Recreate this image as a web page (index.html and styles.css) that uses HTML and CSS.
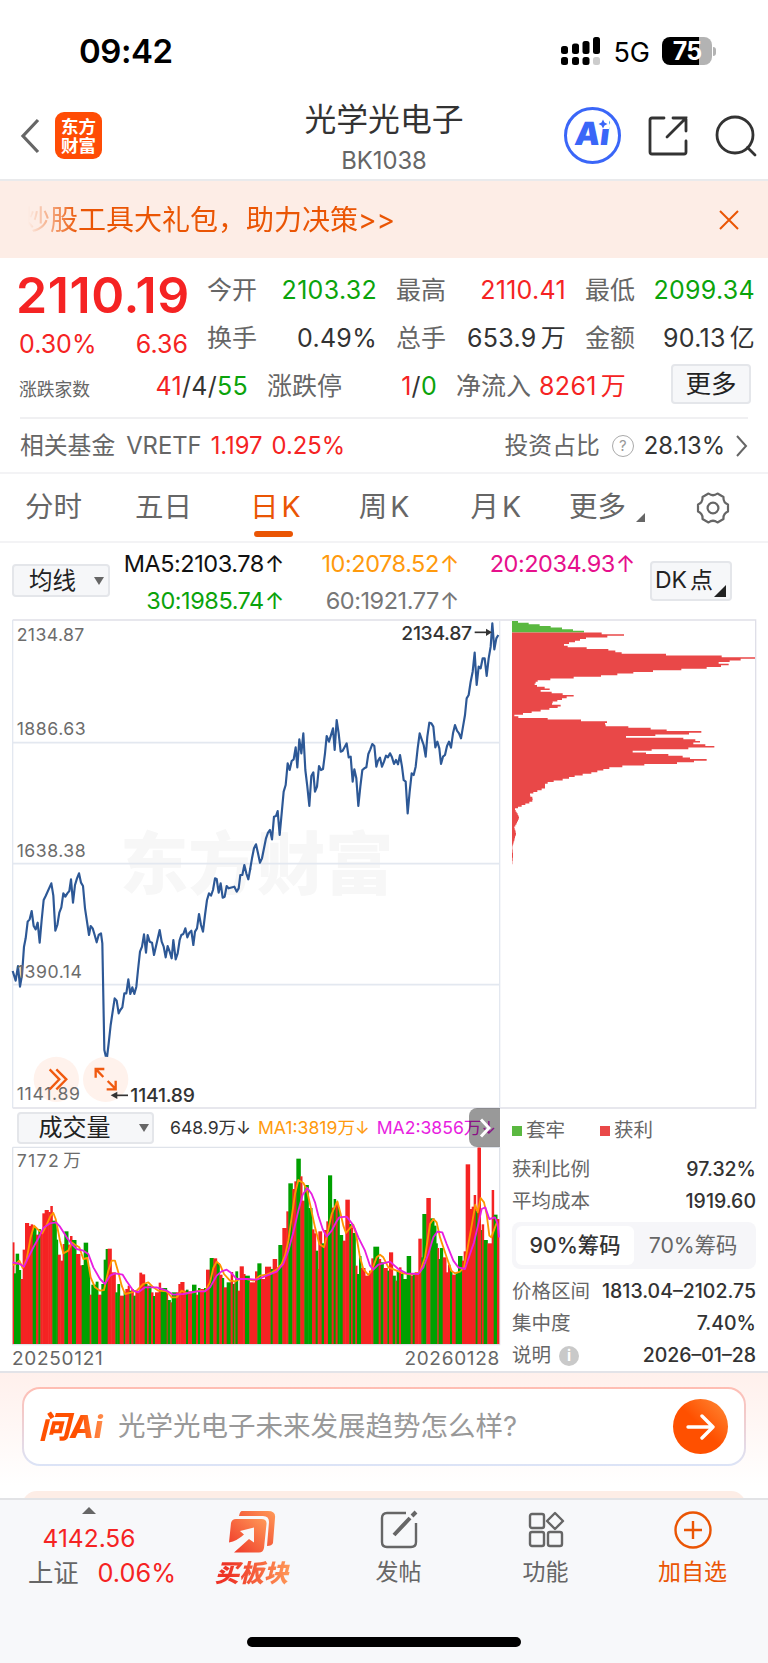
FILE: index.html
```html
<!DOCTYPE html>
<html lang="zh-CN">

<head>
  <meta charset="UTF-8">
  <meta name="viewport" content="width=device-width, initial-scale=1.0">
  <title>光学光电子 BK1038</title>
  <link rel="stylesheet" href="styles.css">
</head>

<body>
  <!-- status bar -->
  <div class="status">
    <span class="clock">09:42</span>
    <div class="status-right">
      <svg class="signal" width="40" height="28" viewBox="0 0 40 28">
        <g fill="#000">
          <rect x="0" y="9" width="7" height="8" rx="2.5" />
          <rect x="11" y="6.500" width="7" height="10.500" rx="2.500" />
          <rect x="21.500" y="4" width="7" height="13" rx="2.500" />
          <rect x="32" y="0" width="7" height="17" rx="2.500" />
          <rect x="0" y="20" width="7" height="8" rx="2.500" />
          <rect x="11" y="20" width="7" height="8" rx="2.500" />
          <rect x="21.500" y="20" width="7" height="8" rx="2.500" />
        </g>
        <rect x="32" y="20" width="7" height="8" rx="2.500" fill="#ccc" />
      </svg>
      <span class="net">5G</span>
      <div class="battery">75</div>
      <i class="battery-tip"></i>
    </div>
  </div>

  <!-- nav -->
  <div class="nav">
    <div class="nav-left">
      <svg width="20" height="36" viewBox="0 0 20 36"><path d="M18 2L3 18L18 34" fill="none" stroke="#666" stroke-width="3.200" /></svg>
      <div class="logo">东方<br>财富</div>
    </div>
    <div class="nav-title">
      <div class="name">光学光电子</div>
      <div class="code">BK1038</div>
    </div>
    <div class="nav-right">
      <div class="ai-badge"><span>Ai</span>
        <svg width="12" height="10" viewBox="0 0 12 10"><path d="M6 0.500L7.500 3.500L10.500 5L7.500 6.500L6 9.500L4.500 6.500L1.500 5L4.500 3.500Z" fill="#3a66f8" /></svg>
      </div>
      <svg width="42" height="42" viewBox="0 0 42 42" fill="none" stroke="#333" stroke-width="2.800" stroke-linecap="round">
        <path d="M17 3H5Q3 3 3 5V37Q3 39 5 39H37Q39 39 39 37V26" />
        <path d="M26 3H39V16M39 3L20 22" />
      </svg>
      <svg class="search" width="42" height="42" viewBox="0 0 42 42" fill="none" stroke="#333" stroke-width="2.800" stroke-linecap="round">
        <circle cx="20" cy="20" r="18" />
        <path d="M32.500 32.500L40 40" />
      </svg>
    </div>
  </div>

  <!-- banner -->
  <div class="banner">
    <div class="banner-text">炒股工具大礼包，助力决策&gt;&gt;</div>
    <svg width="20" height="20" viewBox="0 0 20 20"><path d="M1 1L19 19M19 1L1 19" stroke="#ea5504" stroke-width="2" /></svg>
  </div>

  <!-- quote -->
  <div class="quote">
    <div class="quote-grid">
      <div class="price">
        <div class="now red">2110.19</div>
        <div class="change red"><span>0.30%</span><span>6.36</span></div>
      </div>
      <div class="cell"><label>今开</label><b class="green">2103.32</b></div>
      <div class="cell"><label>最高</label><b class="red">2110.41</b></div>
      <div class="cell"><label>最低</label><b class="green">2099.34</b></div>
      <div class="cell"><label>换手</label><b>0.49%</b></div>
      <div class="cell"><label>总手</label><b>653.9<i>万</i></b></div>
      <div class="cell"><label>金额</label><b>90.13<i>亿</i></b></div>
    </div>
    <div class="quote-row">
      <div class="cell updown"><label class="small">涨跌家数</label><b><span class="red">41</span>/4/<span class="green">55</span></b></div>
      <div class="cell limit"><label>涨跌停</label><b><span class="red">1</span>/<span class="green">0</span></b></div>
      <div class="cell inflow"><label>净流入</label><b class="red">8261<i>万</i></b></div>
      <button class="btn btn-more">更多</button>
    </div>
    <div class="fund">
      <span class="fund-name">相关基金</span>
      <span class="fund-code">VRETF</span>
      <span class="red fund-price">1.197</span>
      <span class="red">0.25%</span>
      <span class="fund-right">投资占比</span>
      <span class="help">?</span>
      <span class="dark">28.13%</span>
      <svg width="13" height="22" viewBox="0 0 13 22"><path d="M2 1L11 11L2 21" fill="none" stroke="#666" stroke-width="2" /></svg>
    </div>
  </div>

  <!-- tabs -->
  <div class="tabs">
    <span>分时</span>
    <span>五日</span>
    <span class="active">日<em>K</em></span>
    <span>周<em>K</em></span>
    <span>月<em>K</em></span>
    <span class="tab-more">更多<svg width="9" height="9" viewBox="0 0 9 9"><path d="M9 0V9H0Z" fill="#666" /></svg></span>
    <svg class="gear" width="34" height="34" viewBox="-17 -17 34 34" fill="none" stroke="#666" stroke-width="2.200">
      <path d="M-4.500 -14.500Q0 -11 4.500 -14.500L10.500 -11Q10 -5.500 15 -3.500V3.500Q10 5.500 10.500 11L4.500 14.500Q0 11 -4.500 14.500L-10.500 11Q-10 5.500 -15 3.500V-3.500Q-10 -5.500 -10.500 -11Z" stroke-linejoin="round" />
      <circle r="5.400" />
    </svg>
  </div>

  <!-- ma -->
  <div class="ma">
    <button class="btn btn-ma">均线<i></i></button>
    <div class="ma-list">
      <span class="c-black">MA5:2103.78<u>↑</u></span>
      <span class="c-orange">10:2078.52<u>↑</u></span>
      <span class="c-pink">20:2034.93<u>↑</u></span>
      <span class="green">30:1985.74<u>↑</u></span>
      <span class="c-gray">60:1921.77<u>↑</u></span>
    </div>
    <button class="btn btn-dk">DK<span>点</span><svg width="12" height="12" viewBox="0 0 12 12"><path d="M12 0V12H0Z" fill="#222" /></svg></button>
  </div>

  <!-- charts -->
  <div class="charts">
    <div class="chart-left">
      <svg class="kline" width="506" height="492" viewBox="0 24 1518 1476">
        <text class="watermark" x="360" y="838" textLength="820">东方财富</text>
        <g fill="none" stroke="#e3e8f0" stroke-width="5">
          <path d="M38 398H1499M38 761H1499M38 1124H1499" />
          <path d="M38 30H1518M38 1494H1518" stroke="#dfdfe8" />
          <path d="M38 30V1494M1499 30V1494" stroke-width="4" />
        </g>
        <g fill="none" stroke="#2d5896" stroke-width="6.500" stroke-linejoin="round">
          <polyline points="38,1083 47,1112 54,1068 60,1130 66,1095 72,1010 77,985 83,935 89,928 95,903 101,948 107,958 113,938 119,998 125,930 131,870 137,858 154,820 160,857 166,962 172,945 178,908 184,892 190,850 196,860 202,850 208,843 213,808 219,878 225,825 231,805 237,790 243,818 249,828 255,895 261,935 267,975 272,948 278,955 284,975 290,997 296,975 303,970 307,1000 313,1320 320,1350 326,1300 332,1245 338,1205 344,1165 350,1172 356,1210 361,1200 367,1192 373,1150 379,1150 385,1108 391,1152 397,1132 403,1152 409,1130 414,1080 420,1025 426,1010 432,973 438,1028 443,975 449,995 456,998 462,1035 479,960 485,995 491,1010 497,1042 503,1008 509,1025 515,1045 520,990 527,1048 533,1030 539,990 544,975 550,972 556,955 562,982 568,968 574,962 580,1005 585,965 591,955 597,912 603,945 609,965 615,915 621,870 627,850 633,857 639,840 645,805 650,807 656,848 662,820 668,863 674,860 680,828 686,835 703,830 710,845 716,835 721,795 727,795 733,765 739,790 745,808 751,775" />
          <polyline transform="translate(750)" points="0,780 6,745 12,715 18,703 24,730 30,758 36,745 42,715 48,685 54,668 60,660 66,688 72,620 78,618 83,603 89,675 95,610 101,545 107,525 113,460 119,480 125,453 131,448 137,412 142,472 148,388 154,430 160,370 166,480 172,530 178,588 184,498 190,487 195,545 201,530 207,468 213,480 219,477 225,430 230,378 237,395 249,355 254,420 260,330 266,370 272,425 278,422 290,400 296,442 302,440 308,515 313,478 319,505 325,588 331,530 337,480 343,475 349,472 355,432 361,418 367,402 373,408 379,470 384,452 390,443 396,470 402,455 408,437 414,442 420,430 426,442 432,462 438,450 444,463 450,435 456,470 461,510 467,515 473,610 479,545 485,490 491,495 497,470 503,415 509,370 515,388 521,405 527,440 532,380 538,338 544,340 550,350 556,412 562,395 568,415 573,462 579,440 585,435 591,408 597,395 603,413 609,370 615,345 621,362 627,370 633,385 639,350 645,315 650,265 656,255 662,215 668,185 674,128 680,225 686,170 692,175 698,145 704,145 710,198 716,145 722,110 727,40 733,118 739,85 745,75" />
        </g>
        <g fill="#fff2ec">
          <circle cx="169" cy="1408" r="68" />
          <circle cx="317" cy="1408" r="68" />
        </g>
        <g class="axis">
          <text x="50" y="93" textLength="203">2134.87</text>
          <text x="50" y="376" textLength="207">1886.63</text>
          <text x="50" y="741" textLength="207">1638.38</text>
          <text x="50" y="1104" textLength="196">1390.14</text>
          <text x="50" y="1470" textLength="190">1141.89</text>
        </g>
        <path d="M149 1378L178 1408L149 1438M169 1378L199 1408L169 1438" fill="none" stroke="#f05a10" stroke-width="7" />
        <path d="M287 1403V1377H313M289 1379L310 1401M347 1412V1438H320M346 1436L323 1413" fill="none" stroke="#f05a10" stroke-width="7" />
        <g class="mark">
          <text x="1204" y="89" textLength="212">2134.87</text>
          <path d="M1424 67H1462" stroke="#333" stroke-width="5" />
          <path d="M1476 67L1458 56V78Z" />
          <text x="391" y="1476" textLength="194">1141.89</text>
          <path d="M384 1456H345" stroke="#333" stroke-width="5" />
          <path d="M332 1456L352 1445V1467Z" />
        </g>
      </svg>

      <div class="vol-head">
        <button class="btn btn-vol">成交量<i></i></button>
        <span class="dark">648.9万<u>↓</u></span>
        <span class="c-orange">MA1:3819万<u>↓</u></span>
        <span class="c-magenta">MA2:3856万<u>↓</u></span>
        <div class="next"><svg width="12" height="20" viewBox="0 0 12 20"><path d="M2 1.500L10 10L2 18.500" fill="none" stroke="#fff" stroke-width="3" /></svg></div>
      </div>

      <svg class="volume" width="506" height="200" viewBox="0 226 1518 600">
        <path d="M38 230H1499M38 230V822H1499V230" fill="none" stroke="#dfe3ea" stroke-width="4" />
        <g id="bars"></g>
        <text class="axis" x="50" y="289" textLength="126">7172</text>
        <text class="axis" x="190" y="289">万</text>
        <g fill="none" stroke-width="5.500" stroke-linejoin="round">
          <polyline stroke="#ff9500" points="38,583 47,580 58,570 68,592 80,565 92,500 102,465 112,475 127,488 140,462 152,435 160,427 167,445 180,510 190,548 205,540 215,515 225,522 238,530 250,565 262,562 272,620 285,650 300,660 312,658 325,600 335,570 345,570 355,605 365,645 375,670 395,665 410,660 430,640 445,635 460,650 475,660 500,662 515,680 530,680 545,660 560,668 580,665 600,660 615,662 630,635 640,592 650,573 660,582 672,610 690,630 705,632 720,625 740,625 762,630 780,615 800,612 815,605 830,597 845,580 855,555 865,510 875,440 885,370 895,328 910,337 920,355 930,400 945,470 958,520 972,530 982,490 995,430 1012,392 1022,430 1030,465 1038,487 1050,472 1060,462 1068,490 1080,560 1090,595 1105,613 1115,600 1130,560 1140,552 1150,560 1165,590 1190,600 1210,608 1235,612 1260,605 1275,560 1290,460 1300,445 1310,455 1320,500 1340,560 1355,602 1365,608 1380,603 1392,590 1405,520 1415,465 1426,402 1433,425 1442,382 1452,395 1460,430 1468,495 1474,500 1485,470 1492,452" />
          <polyline stroke="#e81ee0" points="38,575 60,580 72,588 85,560 100,530 115,503 130,472 150,458 168,455 180,468 200,500 215,520 230,535 250,540 265,550 280,590 300,625 315,640 330,615 345,608 368,612 380,632 400,660 415,665 435,650 470,650 500,660 520,672 550,670 590,662 615,662 630,650 650,615 665,602 680,597 695,608 710,625 740,625 770,627 800,615 830,603 850,580 865,540 880,485 895,420 908,372 922,352 935,370 945,395 955,435 968,475 980,498 995,480 1008,455 1018,440 1040,438 1055,457 1065,475 1075,500 1095,540 1110,585 1120,597 1135,582 1170,573 1195,595 1220,608 1255,610 1270,590 1285,550 1300,500 1312,483 1327,485 1340,520 1360,570 1375,590 1395,595 1410,550 1422,515 1435,460 1445,415 1456,410 1468,445 1485,440 1493,460 1497,500" />
        </g>
      </svg>
      <div class="dates"><span>20250121</span><span>20260128</span></div>
    </div>

    <div class="chart-right">
      <svg class="chips" width="262" height="492" viewBox="18 24 786 1476">
        <path d="M18 30H767V1494H18" fill="none" stroke="#dfdfe8" stroke-width="4" />
        <path id="chips-green" fill="#5ab840" />
        <path id="chips-red" fill="#e94848" />
      </svg>
      <div class="legend"><i class="bg-green"></i>套牢<i class="bg-red"></i>获利</div>
      <div class="info"><span>获利比例</span><b>97.32%</b></div>
      <div class="info"><span>平均成本</span><b>1919.60</b></div>
      <div class="switch"><span class="on">90%筹码</span><span>70%筹码</span></div>
      <div class="info"><span>价格区间</span><b>1813.04–2102.75</b></div>
      <div class="info"><span>集中度</span><b>7.40%</b></div>
      <div class="info last"><span>说明<i>i</i></span><b>2026–01–28</b></div>
    </div>
  </div>

  <!-- ask ai -->
  <div class="ask">
    <div class="ask-box">
      <span class="ask-logo">问Ai</span>
      <span class="ask-text">光学光电子未来发展趋势怎么样?</span>
      <div class="ask-go"><svg width="30" height="26" viewBox="0 0 30 26"><path d="M2 13H27M16 2L27 13L16 24" fill="none" stroke="#fff" stroke-width="3.400" stroke-linecap="round" stroke-linejoin="round" /></svg></div>
    </div>
    <div class="next-card"></div>
  </div>

  <!-- footer -->
  <div class="footer">
    <div class="index">
      <i></i>
      <div class="red">4142.56</div>
      <div class="index-row"><span>上证</span><span class="red">0.06%</span></div>
    </div>
    <div class="item buy">
      <svg width="48" height="44" viewBox="0 0 48 44">
        <defs>
          <linearGradient id="g1" x1="0" y1="1" x2="1" y2="0">
            <stop offset="0" stop-color="#ee3326" />
            <stop offset="1" stop-color="#ff9a58" />
          </linearGradient>
        </defs>
        <path d="M14 1H40Q48 1 47 8L45 33Q44 36 39 36L41 12Q41 6 35 6H11Q12 1 14 1Z" fill="url(#g1)" />
        <path d="M8 9H33Q39 9 38.500 14L36 38Q35 42.500 31 42.500H6L21 29L26 32.500V17.500L12 21L16 24.500Q9 31 1 32.500L3 13Q4 9 8 9Z" fill="url(#g1)" />
      </svg>
      <span>买板块</span>
    </div>
    <div class="item">
      <svg width="40" height="40" viewBox="0 0 40 40" fill="none" stroke="#666" stroke-width="2.400">
        <path d="M27 3H8Q3 3 3 8V32Q3 37 8 37H32Q37 37 37 32V13" />
        <path d="M15 25L31 8M33 6L37 2" stroke-width="4" />
      </svg>
      <span>发帖</span>
    </div>
    <div class="item">
      <svg width="40" height="40" viewBox="0 0 40 40" fill="none" stroke="#666" stroke-width="2.400" stroke-linejoin="round">
        <rect x="4" y="4" width="14" height="14" rx="2" />
        <rect x="4" y="22" width="14" height="14" rx="2" />
        <rect x="22" y="22" width="14" height="14" rx="2" />
        <path d="M29 3L37 11L29 19L21 11Z" />
      </svg>
      <span>功能</span>
    </div>
    <div class="item add">
      <svg width="40" height="40" viewBox="0 0 40 40" fill="none" stroke="#ea5504" stroke-width="2.400">
        <circle cx="20" cy="20" r="17.500" />
        <path d="M20 11V29M11 20H29" />
      </svg>
      <span>加自选</span>
    </div>
    <div class="home-bar"></div>
  </div>

  <script src="chart.js"></script>
</body>

</html>
```

FILE: styles.css
```css
/* CSS Reset start */
* {
  box-sizing: border-box;
}

body {
  margin: 0;
  width: 768px;
  height: 1663px;
  overflow: hidden;
  background: #fff;
  color: #666;
  font-family: Inter, "Noto Sans CJK SC", sans-serif;
  font-size: 24px;
  line-height: 1;
  white-space: nowrap;
}

i,
em {
  font-style: normal;
}

b {
  font-weight: 400;
}

u {
  text-decoration: none;
}

svg {
  display: block;
  flex: none;
}

/* CSS Reset end */

/* color */
.red { color: #f52323; }
.green { color: #0ba30b; }
.dark { color: #333; }
.c-black { color: #111; }
.c-orange { color: #ff9a0d; }
.c-pink { color: #e6108c; }
.c-gray { color: #777; }
.c-magenta { color: #e81ee0; }

.btn {
  display: flex;
  align-items: center;
  justify-content: center;
  padding: 0;
  border: 2px solid #e4e6ea;
  border-radius: 4px;
  background: #f6f7f9;
  color: #222;
  font-family: inherit;
  line-height: 1;
}

/* status start */
.status {
  display: flex;
  align-items: center;
  justify-content: space-between;
  height: 102px;
  padding: 0 52px 0 79px;
}

.clock {
  color: #000;
  font-size: 33px;
  font-weight: 600;
  letter-spacing: -0.5px;
}

.status-right {
  display: flex;
  align-items: center;
  color: #000;
}

.net {
  margin: 2px 12px 0;
  font-size: 27px;
}

.battery {
  width: 50px;
  height: 28px;
  border-radius: 8px;
  background: linear-gradient(90deg, #000 74%, #b3b3b3 74%);
  color: #fff;
  font-size: 25px;
  font-weight: 700;
  line-height: 28px;
  text-align: center;
  letter-spacing: -1px;
}

.battery-tip {
  width: 3px;
  height: 9px;
  margin-left: 1px;
  border-radius: 0 3px 3px 0;
  background: #b3b3b3;
}

/* status end */

/* nav start */
.nav {
  display: grid;
  grid-template-columns: 1fr 200px 1fr;
  height: 79px;
  border-bottom: 2px solid #e9eaec;
}

.nav-left {
  display: flex;
  align-items: center;
  gap: 15px;
  height: 67px;
  padding-left: 20px;
}

.logo {
  width: 47px;
  height: 47px;
  padding-top: 5px;
  border-radius: 9px;
  background: #ff4c05;
  color: #fff;
  font-size: 17.5px;
  font-weight: 700;
  line-height: 19px;
  text-align: center;
}

.nav-title {
  text-align: center;
}

.name {
  margin-top: 2px;
  color: #333;
  font-size: 31.8px;
}

.code {
  margin-top: 13px;
  font-size: 23.8px;
}

.nav-right {
  display: flex;
  align-items: center;
  justify-content: flex-end;
  gap: 26px;
  height: 67px;
  padding-right: 11px;
}

.ai-badge {
  position: relative;
  width: 57px;
  height: 57px;
  border: 3px solid #3a66f8;
  border-radius: 50%;
  color: #3a66f8;
  font-size: 32px;
  font-weight: 900;
  line-height: 48px;
  text-align: center;
}

.ai-badge span {
  display: inline-block;
  transform: skewX(-7deg);
}

.ai-badge svg {
  position: absolute;
  top: 9px;
  right: 9px;
  background: #fff;
}

/* nav end */

/* banner start */
.banner {
  display: flex;
  align-items: center;
  justify-content: space-between;
  height: 77px;
  padding: 0 29px 0 22px;
  background: #fdede6;
}

.banner-text {
  color: #ea5504;
  font-size: 28px;
  -webkit-mask-image: linear-gradient(90deg, transparent 6px, #000 56px);
  mask-image: linear-gradient(90deg, transparent 6px, #000 56px);
}

/* banner end */

/* quote start */
.quote {
  height: 216px;
  padding: 8px 13px 0 19px;
  border-bottom: 2px solid #f3f3f5;
}

.quote-grid {
  display: grid;
  grid-template-columns: repeat(4, 169px);
  grid-auto-rows: 48px;
  column-gap: 20px;
}

.price {
  grid-row: span 2;
}

.now {
  margin: 4px 0 0 -3px;
  font-size: 50px;
  font-weight: 600;
  letter-spacing: 0.6px;
}

.change {
  display: flex;
  justify-content: space-between;
  margin-top: 12px;
  font-size: 25px;
}

.cell {
  display: flex;
  align-items: center;
  justify-content: space-between;
  color: #333;
  font-size: 25px;
}

.quote-grid .cell label {
  margin-left: -1px;
}

.cell b {
  letter-spacing: 0.3px;
}

.cell label {
  color: #666;
}

.cell i {
  margin-left: 4px;
}

.cell .red {
  color: #f52323;
}

.cell .green {
  color: #0ba30b;
}

.quote-row {
  display: flex;
  align-items: center;
  height: 48px;
}

.cell .small {
  padding-top: 7px;
  font-size: 17.8px;
}

.updown {
  width: 229px;
}

.limit {
  width: 170px;
  margin-left: 19px;
}

.inflow {
  width: 170px;
  margin-left: 19px;
}

.btn-more {
  width: 80px;
  height: 40px;
  margin: -5px 4px 0 auto;
  font-size: 25.5px;
}

.fund {
  display: flex;
  align-items: center;
  height: 55px;
  margin: 7px 7px 0 1px;
  border-top: 2px solid #f0f0f2;
  font-size: 23.8px;
}

.fund-code {
  margin: 0 11px;
}

.fund-price {
  margin-left: -2px;
  margin-right: 9px;
}

.fund-right {
  margin-left: auto;
}

.help {
  width: 22px;
  height: 22px;
  margin: 0 10px 0 12px;
  border: 1.5px solid #aaa;
  border-radius: 50%;
  color: #999;
  font-size: 15px;
  line-height: 19px;
  text-align: center;
}

.fund svg {
  margin-left: 10px;
}

/* quote end */

/* tabs start */
.tabs {
  display: flex;
  align-items: center;
  height: 69px;
  padding-left: 25px;
  border-bottom: 2px solid #f3f3f5;
  font-size: 28.5px;
}

.tabs span {
  margin-right: 53px;
}

.tabs span:nth-child(2) {
  margin-right: 58px;
}

.tabs span:nth-child(4) {
  margin: 0 61px 0 5px;
}

.tabs span:nth-child(5) {
  margin-right: 48px;
}

.tabs em {
  margin-left: 3px;
}

.tabs span.active {
  position: relative;
  color: #ea5504;
}

.active::after {
  content: "";
  position: absolute;
  left: 4px;
  bottom: -15px;
  width: 39px;
  height: 6px;
  border-radius: 3px;
  background: #ea5504;
}

.tabs .tab-more {
  display: flex;
  align-items: flex-end;
  gap: 10px;
  margin-right: 51px;
}

/* tabs end */

/* ma start */
.ma {
  display: flex;
  align-items: center;
  height: 75px;
  padding: 0 36px 0 12px;
}

.btn-ma {
  width: 98px;
  height: 33px;
  padding-left: 11px;
  font-size: 23.5px;
}

.btn i {
  margin-left: 18px;
  border: 5px solid transparent;
  border-top: 8px solid #666;
  border-bottom: 0;
}

.ma-list {
  display: grid;
  grid-template-columns: 174px 175px 176px;
  padding-top: 2px;
  font-size: 23.5px;
  letter-spacing: -0.45px;
  line-height: 37px;
  text-align: right;
}

.ma-list u {
  margin-left: 1px;
}

.btn-dk {
  position: relative;
  width: 82px;
  height: 40px;
  margin-left: auto;
  padding-right: 14px;
  font-size: 23px;
}

.btn-dk span {
  margin-left: 3px;
}

.btn-dk svg {
  position: absolute;
  right: 4px;
  bottom: 2px;
}

/* ma end */

/* charts start */
.charts {
  display: flex;
  height: 755px;
  border-bottom: 2px solid #e2e3e8;
}

.chart-left {
  flex: none;
  width: 506px;
}

.axis {
  fill: #6c6c6c;
  font-size: 53px;
}

.mark {
  fill: #333;
  font-size: 58px;
  font-weight: 500;
}

.watermark {
  fill: #f7f7f7;
  font-size: 205px;
  font-weight: 900;
}

.vol-head {
  position: relative;
  display: flex;
  align-items: center;
  height: 36px;
  padding-left: 17px;
  font-size: 17.6px;
}

.btn-vol {
  flex: none;
  width: 137px;
  height: 32px;
  margin-right: 16px;
  padding-left: 16px;
  font-size: 24px;
}

.btn-vol i {
  margin-left: 28px;
}

.vol-head span {
  margin-right: 7px;
}

.next {
  position: absolute;
  top: -2px;
  right: 6px;
  display: flex;
  align-items: center;
  justify-content: center;
  width: 31px;
  height: 39px;
  border-radius: 8px 0 0 8px;
  background: rgba(0, 0, 0, 0.4);
}

.dates {
  display: flex;
  justify-content: space-between;
  padding: 3px 6px 0 12px;
  font-size: 19px;
  letter-spacing: 0.7px;
}

.chart-right {
  flex: none;
  width: 262px;
}

.legend {
  display: flex;
  align-items: center;
  height: 41px;
  padding-left: 6px;
  font-size: 19.5px;
}

.legend i {
  width: 10px;
  height: 10px;
  margin-right: 4px;
}

.legend .bg-red {
  margin-left: 35px;
  background: #e94848;
}

.bg-green {
  background: #5ab840;
}

.info {
  display: flex;
  align-items: center;
  justify-content: space-between;
  height: 31.5px;
  padding: 0 12px 0 6px;
  font-size: 19.5px;
}

.legend + .info {
  margin-top: 3px;
}

.info b {
  color: #333;
  font-weight: 500;
}

.info span {
  display: flex;
  align-items: center;
}

.info i {
  width: 20px;
  height: 20px;
  margin-left: 8px;
  border-radius: 50%;
  background: #c9c9c9;
  color: #fff;
  font-size: 15px;
  font-weight: 700;
  line-height: 20px;
  text-align: center;
}

.last {
  height: 34px;
}

.switch {
  display: flex;
  width: 244px;
  height: 47px;
  margin: 5px 0 7px 6px;
  padding: 4px;
  border-radius: 8px;
  background: #f6f6f9;
  font-size: 21.3px;
  line-height: 39px;
  text-align: center;
}

.switch span {
  flex: 1;
}

.switch .on {
  border-radius: 6px;
  background: #fff;
  color: #333;
  font-weight: 500;
}

/* charts end */

/* ask start */
.ask {
  height: 125px;
  padding: 14px 22px 0;
  overflow: hidden;
  background: linear-gradient(#fff0ec, #fff 90%);
}

.ask-box {
  display: flex;
  align-items: center;
  height: 79px;
  padding: 0 16px 0 15px;
  border: 2px solid transparent;
  border-radius: 18px;
  background: linear-gradient(#fff, #fff) padding-box, linear-gradient(#ffbdb3, #dbe4f7) border-box;
}

.ask-logo {
  width: 79px;
  background: linear-gradient(90deg, #ff5000 50%, #ff8a4a 80%);
  -webkit-background-clip: text;
  background-clip: text;
  color: transparent;
  font-size: 31px;
  font-style: italic;
  font-weight: 800;
  line-height: 40px;
}

.ask-text {
  color: #999;
  font-size: 27.5px;
}

.ask-go {
  display: flex;
  align-items: center;
  justify-content: center;
  width: 55px;
  height: 55px;
  margin-left: auto;
  border-radius: 50%;
  background: linear-gradient(45deg, #ff5000 50%, #ff8c38);
}

.next-card {
  height: 30px;
  margin-top: 25px;
  border-radius: 20px;
  background: #fdede6;
}

/* ask end */

/* footer start */
.footer {
  position: relative;
  display: flex;
  height: 165px;
  border-top: 2px solid #e2e3e6;
  background: #f7f8fa;
}

.index {
  width: 178px;
  font-size: 24.5px;
  text-align: center;
}

.index > i {
  display: block;
  width: 0;
  margin: 7px auto 12px;
  border: 7px solid transparent;
  border-top: 0;
  border-bottom: 7px solid #666;
}

.index-row {
  display: flex;
  justify-content: space-between;
  margin: 9px 2px 0 28px;
  font-size: 25.3px;
}

.item {
  display: flex;
  flex-direction: column;
  align-items: center;
  width: 147px;
  padding-top: 10px;
  font-size: 23px;
}

.item span {
  margin-top: 11px;
}

.buy svg {
  margin-bottom: -4px;
}

.buy span {
  margin-top: 9px;
  padding: 0 3px;
  background: linear-gradient(90deg, #ee3326 20%, #ff9a58);
  -webkit-background-clip: text;
  background-clip: text;
  color: transparent;
  font-size: 24.5px;
  font-style: italic;
  font-weight: 900;
  line-height: 28px;
}

.add span {
  color: #ea5504;
}

.home-bar {
  position: absolute;
  left: 247px;
  bottom: 16px;
  width: 274px;
  height: 10px;
  border-radius: 5px;
  background: #000;
}

/* footer end */
```

FILE: chart.js
```js
var NS = "http://www.w3.org/2000/svg";

function addRect(parent, x, y, w, h, color) {
  var r = document.createElementNS(NS, "rect");
  r.setAttribute("x", x);
  r.setAttribute("y", y);
  r.setAttribute("width", w);
  r.setAttribute("height", h);
  r.setAttribute("fill", color);
  parent.appendChild(r);
}

// 成交量：起点 x, 顶部 y, 颜色
var vol = [
  38,515,"r", 42,608,"g", 47,549,"g", 56,598,"g", 62,625,"r", 68,537,"r", 75,457,"r", 86,466,"r", 92,461,"r", 98,472,"g",
  108,492,"r", 115,475,"g", 121,488,"r", 127,428,"r", 134,418,"r", 145,424,"r", 151,406,"r", 157,450,"g", 169,507,"g", 173,552,"r",
  181,570,"r", 188,520,"r", 193,482,"g", 204,522,"r", 210,496,"r", 216,508,"g", 228,550,"r", 240,584,"r", 245,583,"g", 251,516,"g",
  263,590,"g", 269,672,"r", 274,642,"g", 287,633,"g", 294,672,"r", 304,640,"g", 311,567,"g", 317,535,"g", 323,534,"r", 334,605,"r",
  346,665,"g", 352,640,"g", 359,675,"r", 371,665,"g", 376,655,"r", 383,645,"r", 388,660,"g", 394,655,"r", 400,675,"g", 406,660,"r",
  418,606,"r", 425,611,"r", 434,640,"g", 441,645,"r", 446,645,"g", 453,665,"r", 459,676,"g", 465,665,"r", 476,636,"r", 482,652,"g",
  500,660,"r", 503,688,"g", 511,695,"r", 515,665,"g", 528,665,"r", 535,640,"r", 541,634,"r", 552,660,"r", 558,657,"g", 564,662,"r",
  576,642,"g", 588,672,"r", 594,652,"g", 600,655,"r", 612,652,"g", 618,597,"r", 629,562,"g", 640,563,"r", 650,577,"g", 658,612,"r",
  666,622,"g", 671,650,"r", 680,635,"g", 692,604,"r", 698,640,"g", 703,635,"r", 706,602,"g", 713,660,"r", 719,587,"r", 730,610,"r",
  735,615,"g", 748,635,"r", 765,602,"r", 772,578,"g", 783,625,"r", 795,588,"r", 812,595,"g", 818,565,"r", 830,590,"r", 835,523,"g",
  847,472,"r", 859,422,"r", 865,338,"g", 877,355,"r", 883,332,"r", 889,264,"g", 901,317,"r", 906,390,"r", 913,343,"g", 925,412,"g",
  936,476,"r", 942,488,"r", 947,540,"g", 953,595,"r", 955,482,"r", 965,518,"g", 972,478,"r", 979,452,"r", 984,314,"g", 995,411,"r",
  1001,385,"g", 1007,395,"r", 1013,410,"g", 1018,493,"g", 1028,510,"r", 1036,387,"r", 1048,460,"g", 1053,470,"r", 1058,487,"g", 1066,585,"r",
  1071,610,"g", 1077,556,"g", 1083,592,"r", 1095,615,"r", 1107,600,"r", 1114,563,"r", 1120,528,"g", 1136,565,"r", 1142,575,"g", 1150,592,"r",
  1162,600,"g", 1167,545,"r", 1178,615,"g", 1186,630,"r", 1190,600,"g", 1197,590,"r", 1203,610,"g", 1209,625,"g", 1220,556,"g", 1232,615,"r",
  1238,612,"g", 1244,605,"r", 1255,504,"r", 1264,560,"g", 1267,430,"g", 1279,382,"r", 1291,443,"g", 1302,465,"g", 1308,518,"g", 1312,532,"r",
  1316,565,"g", 1320,532,"g", 1328,560,"r", 1338,605,"r", 1344,582,"r", 1350,600,"g", 1356,612,"r", 1367,605,"g", 1374,556,"g", 1386,570,"r",
  1391,542,"r", 1397,281,"r", 1409,415,"r", 1415,408,"r", 1421,373,"r", 1427,420,"g", 1433,231,"r", 1439,478,"g", 1445,461,"r", 1451,508,"g",
  1462,518,"r", 1475,358,"r", 1481,432,"g", 1491,445,"r", 1498
];
var bars = document.getElementById("bars");
for (var i = 0; i + 3 < vol.length; i += 3) {
  // 与下一根重叠一点，避免出现缝隙
  var w = vol[i + 3] - vol[i] + (i + 4 < vol.length ? 1.5 : 0);
  addRect(bars, vol[i], vol[i + 1], w, 820 - vol[i + 1], vol[i + 2] == "r" ? "#f52323" : "#00a000");
}
addRect(bars, 1433, 231, 10, 589, "#f52323");

// 筹码分布：前 7 行套牢，其余获利
var chips = [
  54, 86, 119, 152, 186, 219, 252,
  305, 372, 322, 258, 240, 225, 207, 192, 203, 260, 325, 346, 365, 498, 665, 765, 722, 689, 656, 686, 663, 620, 544, 459,
  400, 352, 303, 221, 151, 113, 107, 104, 111, 134, 149, 122, 155, 188, 221, 200, 186, 172, 158, 156, 182, 173, 148, 122,
  95, 69, 43, 55, 143, 243, 321, 315, 317, 385, 452, 500, 604, 567, 466, 378, 550, 586, 600, 580, 616, 643, 565, 455,
  398, 438, 505, 548, 570, 620, 582, 531, 433, 367, 328, 310, 292, 274, 248, 224, 207, 188, 161, 143, 135, 135, 135, 125,
  112, 100, 90, 91, 97, 98, 97, 88, 76, 65, 54, 45, 47, 50, 53, 55, 57, 56, 54, 51, 49, 46, 43, 44, 46, 47, 48, 47, 45,
  44, 43, 41, 40, 38, 37, 37, 38, 38, 39, 39, 39, 38, 38, 37, 37
];

function chipPath(from, to) {
  var d = "M36 " + (33 + from * 4.93);
  for (var j = from; j < to; j++) {
    d += "H" + chips[j] + "V" + (33 + (j + 1) * 4.93);
  }
  return d + "H36Z";
}
document.getElementById("chips-green").setAttribute("d", chipPath(0, 7));
document.getElementById("chips-red").setAttribute("d", chipPath(7, chips.length));
```
